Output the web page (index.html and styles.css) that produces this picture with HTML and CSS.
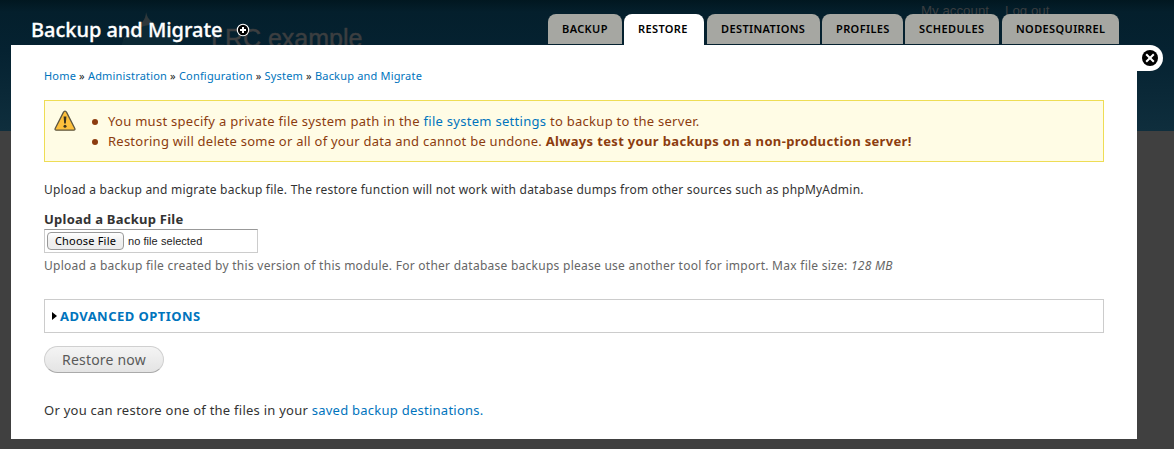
FILE: index.html
```html
<!DOCTYPE html>
<html lang="en">
<head>
<meta charset="utf-8">
<title>Backup and Migrate</title>
<link rel="stylesheet" href="styles.css">
</head>
<body>
<div class="site">
  <svg class="site-logo" width="64" height="36" viewBox="0 0 64 36"><path d="M26 0C28 9 34 11 42 16C52 21 58 29 59 36H1C2 29 6 22 14 17C22 12 26 9 26 0Z" fill="#0c2935"/><path d="M26 0C27 6 30 9 36 13C29 13 22 13 14 19C8 23 5 26 3 29C5 23 10 19 15 16C21 12 26 8 26 0Z" fill="#30383b"/></svg>
  <div class="site-name">LRC example</div>
  <div class="user-links"><span>My account</span><span>Log out</span></div>
</div>
<div class="overlay">
  <header class="title-bar">
    <h1 class="title">Backup and Migrate</h1>
    <svg class="add" width="14" height="14" viewBox="0 0 14 14"><circle cx="7" cy="7" r="5.7" fill="#000" stroke="#fff" stroke-width="1.1"/><path d="M7 4v6M4 7h6" stroke="#fff" stroke-width="2"/></svg>
    <nav class="tabs">
      <a class="tab">BACKUP</a><a class="tab active">RESTORE</a><a class="tab">DESTINATIONS</a><a class="tab">PROFILES</a><a class="tab">SCHEDULES</a><a class="tab">NODESQUIRREL</a>
    </nav>
  </header>
  <main class="panel">
    <a class="close"><svg width="16" height="16" viewBox="0 0 16 16"><circle cx="8" cy="8" r="8" fill="#000"/><path d="M4.200 4.200l7.600 7.600M11.800 4.200l-7.600 7.600" stroke="#fff" stroke-width="2"/></svg></a>
    <div class="breadcrumb"><a>Home</a> » <a>Administration</a> » <a>Configuration</a> » <a>System</a> » <a>Backup and Migrate</a></div>
    <div class="messages">
      <svg class="warn" width="22" height="21" viewBox="0 0 22 21"><path d="M11 1.200Q12 1.200 12.600 2.400L20.800 18.400Q21.400 20.200 19.800 20.200H2.200Q.6 20.200 1.200 18.400L9.400 2.400Q10 1.200 11 1.200Z" fill="#fdc03c" stroke="#5d5640" stroke-width="1.300"/><path d="M9.600 6.500h2.800l-.6 7h-1.600z" fill="#3a321e"/><circle cx="11" cy="16.300" r="1.500" fill="#3a321e"/></svg>
      <ul class="list">
        <li><span>You must specify a private file system path in the <a>file system settings</a> to backup to the server.</span></li>
        <li><span class="notice">Restoring will delete some or all of your data and cannot be undone. </span><strong>Always test your backups on a non-production server!</strong></li>
      </ul>
    </div>
    <p class="intro">Upload a backup and migrate backup file. The restore function will not work with database dumps from other sources such as phpMyAdmin.</p>
    <div class="label">Upload a Backup File</div>
    <div class="file"><span class="choose">Choose File</span><span class="none">no file selected</span></div>
    <div class="description">Upload a backup file created by this version of this module. For other database backups please use another tool for import. Max file size: <em>128 MB</em></div>
    <div class="fieldset"><svg width="5" height="8" viewBox="0 0 5 8"><path d="M0 0L5 4L0 8Z" fill="#000"/></svg><a>ADVANCED OPTIONS</a></div>
    <button class="submit">Restore now</button>
    <p class="outro">Or you can restore one of the files in your <a>saved backup destinations.</a></p>
  </main>
</div>
</body>
</html>
```
FILE: styles.css
```css
* { box-sizing: border-box; }
body { margin: 0; height: 449px; overflow: hidden; background: #404040; font-family: "Noto Sans", "Open Sans", sans-serif; font-size: 13px; color: #333; white-space: nowrap; position: relative; }
h1, p, ul { margin: 0; padding: 0; font-weight: normal; }
a { color: #0074bd; }
.site { position: absolute; left: 0; top: 0; width: 100%; height: 131px; background: linear-gradient(#011720 0, #041f2c 12px, #052231 50px, #0f2e3d 131px); }
.site-logo { position: absolute; left: 120px; top: 12px; }
.site-name { position: absolute; left: 211px; top: 22px; font: 25px/32px "Liberation Sans", sans-serif; color: #3b3e40; -webkit-text-stroke: 0.5px #3b3e40; }
.user-links { position: absolute; left: 921px; top: 2px; display: flex; gap: 16px; font: 13.3px/18px "Liberation Sans", sans-serif; color: #3b3e40; }
.overlay { position: relative; padding: 0 37px 0 11px; }
.title-bar { height: 45px; display: flex; padding: 14px 18px 0 20px; }
.title { font-size: 20px; line-height: 32px; color: #fff; width: 192px; font-weight: 500; letter-spacing: -0.03px; -webkit-text-stroke: 0.3px #fff; }
.add { margin: 9px 0 0 13px; }
.tabs { margin-left: auto; display: flex; gap: 2px; }
.tab { height: 30px; padding: 0 14px; border-radius: 8px 8px 0 0; background: #a6a7a2; color: #000; font-weight: 600; font-size: 11px; line-height: 30px; letter-spacing: 0.38px; }
.tab:nth-child(1) { width: 74px; }
.tab:nth-child(2) { width: 80px; }
.tab:nth-child(3) { width: 113px; margin-left: 1px; }
.tab:nth-child(4) { width: 81px; }
.tab:nth-child(5) { width: 94px; }
.tab:nth-child(6) { width: 117px; margin-left: 1px; }
.tab.active { height: 31px; background: #fff; }
.panel { height: 394px; padding: 22px 33px 0; background: #fff; position: relative; }
.close { position: absolute; left: 1126px; top: 0; width: 26px; height: 26px; padding: 5px; background: #fff; border-radius: 0 13px 13px 0; }
.close svg { display: block; }
.breadcrumb { font-size: 11px; line-height: 18px; height: 18px; color: #222; letter-spacing: 0.185px; }
.messages { margin-top: 15px; height: 62px; border: 1px solid #ed5; background: #fffce5; color: #8c3c0f; padding: 10px 9px; display: flex; letter-spacing: 0.285px; }
.warn { margin-top: -1px; }
.list { list-style: none; margin-left: 16px; }
.list li { height: 20px; line-height: 20px; display: flex; white-space: pre; }
.list li::before { content: ""; width: 5.5px; height: 5.5px; border-radius: 3px; background: #8c3c0f; margin: 8px 10.5px 0 0; }
.notice { letter-spacing: 0.24px; }
.list strong { letter-spacing: 0.34px; }
.intro { margin-top: 17px; line-height: 22px; height: 20px; font-size: 12px; letter-spacing: 0.225px; }
.label { margin-top: 11px; line-height: 19px; height: 18px; font-weight: bold; font-size: 13px; letter-spacing: 0.25px; }
.file { margin-top: 1px; width: 214px; height: 24px; border: 1px solid #ccc; border-top-color: #999; display: flex; align-items: center; padding-left: 2px; color: #222; }
.choose { width: 77px; height: 18px; border: 1px solid #999; border-radius: 4px; background: linear-gradient(#fff, #f0f0f0 50%, #ececec); color: #000; font-size: 11px; line-height: 16px; text-align: center; letter-spacing: 0.2px; }
.none { margin-left: 4px; font: 11px "Liberation Sans", sans-serif; letter-spacing: 0.06px; }
.description { margin-top: 3px; font-size: 12px; line-height: 20px; height: 20px; color: #666; letter-spacing: 0.26px; }
.fieldset { margin-top: 23px; height: 34px; border: 1px solid #ccc; display: flex; align-items: center; gap: 3px; padding: 0 0 1px 7px; font-weight: bold; font-size: 13px; letter-spacing: 0.45px; }
.submit { display: block; margin: 13px 0 0; width: 120px; height: 27px; padding: 0; border: 1px solid #d0d0d0; border-bottom-color: #aaa; border-radius: 14px; background: linear-gradient(#f4f4f4, #e4e4e4); color: #5a5a5a; font: 14px "Noto Sans", sans-serif; letter-spacing: 0.2px; }
.outro { margin-top: 27px; line-height: 20px; font-size: 13px; letter-spacing: 0.25px; }
```
